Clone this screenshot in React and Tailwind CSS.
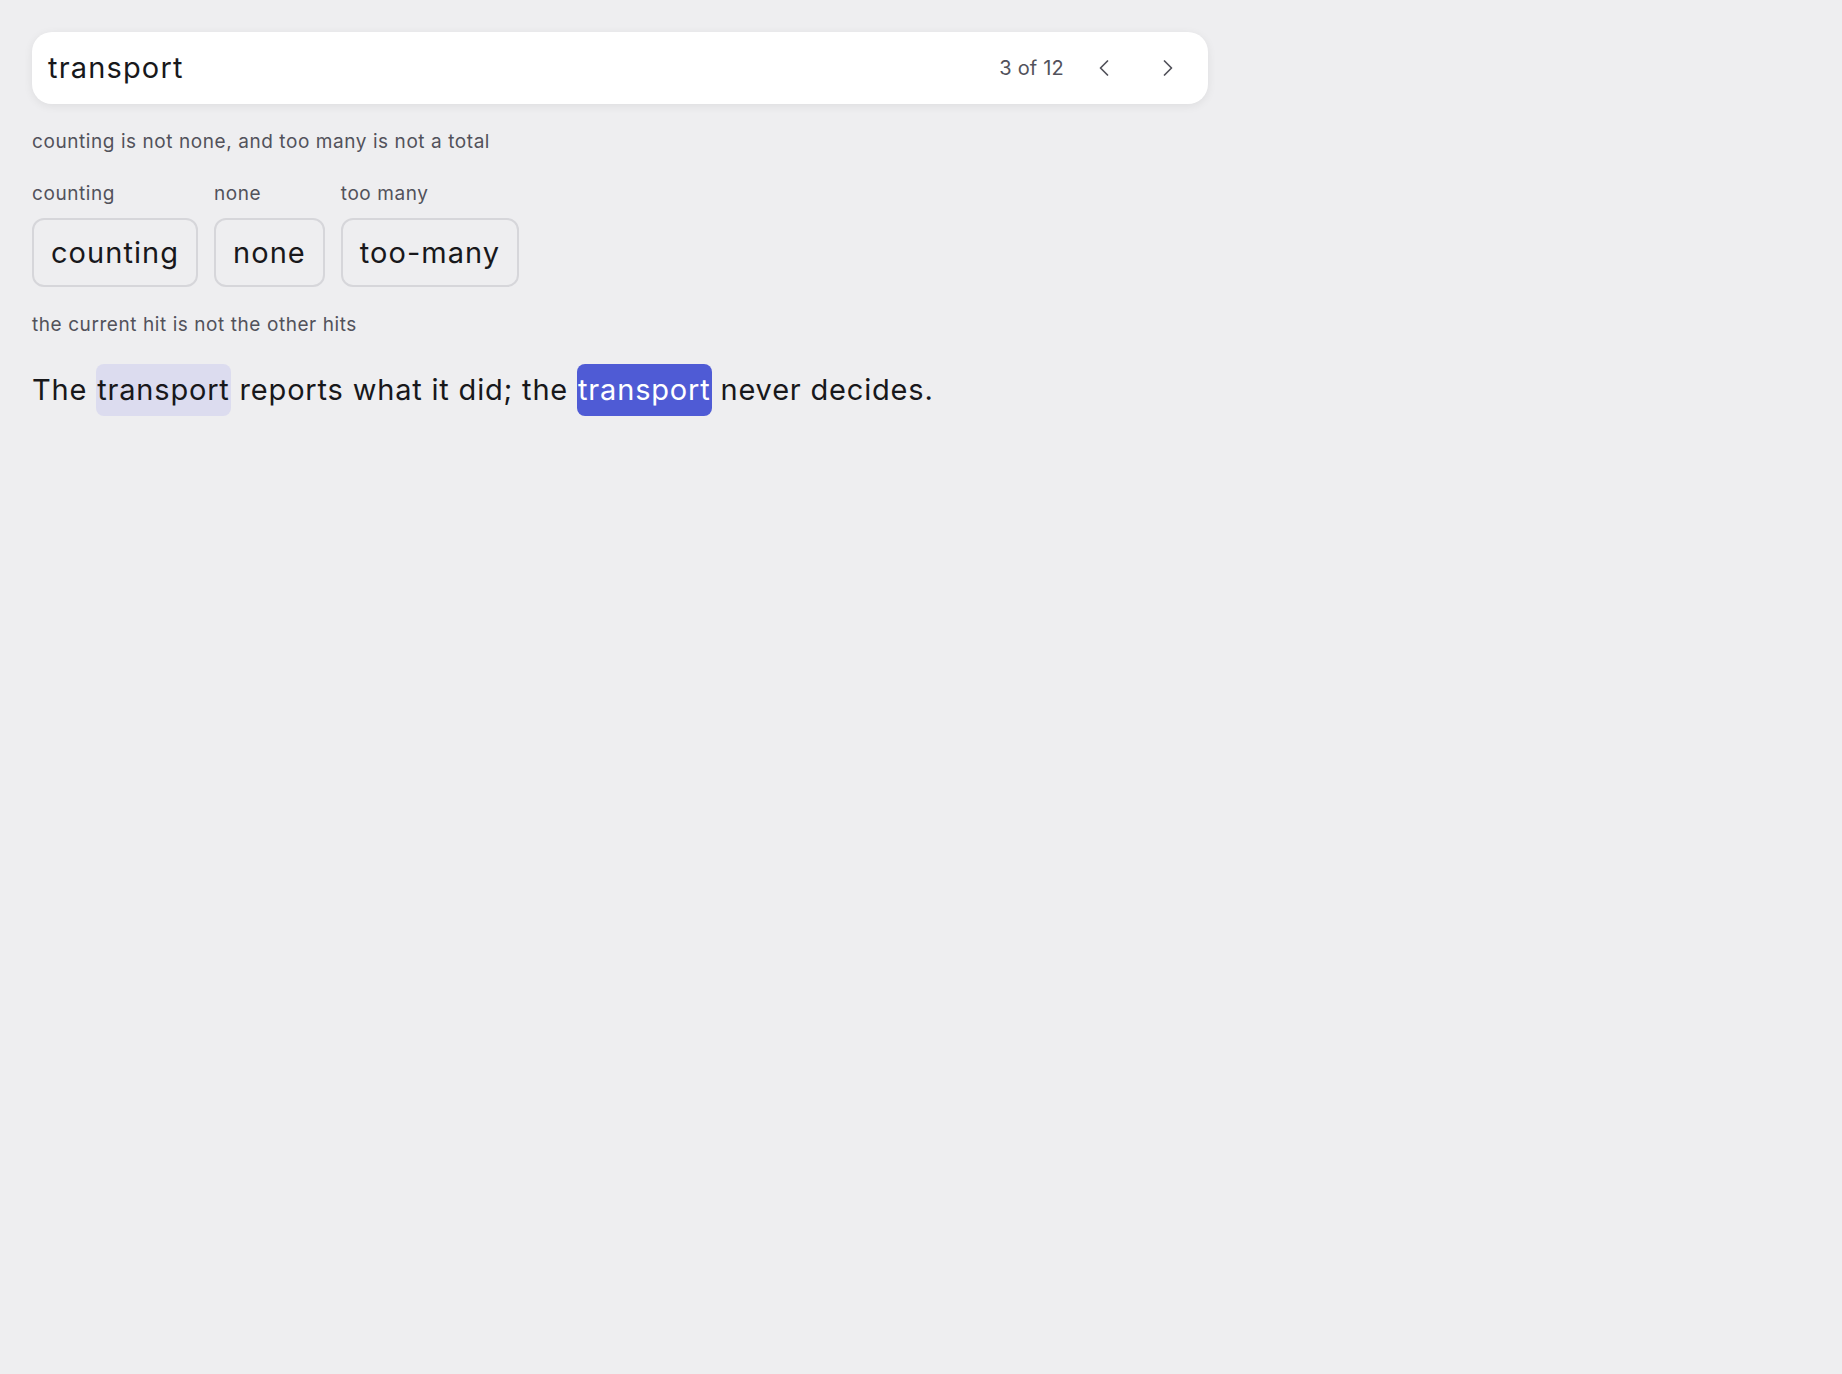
import React from "react";
import { ChevronLeft, ChevronRight } from "lucide-react";

export default function App() {
  const chips = [
    { label: "counting", text: "counting" },
    { label: "none", text: "none" },
    { label: "too many", text: "too-many" },
  ];
  return (
    <div
      className="min-h-screen bg-[#eeeef0] p-8 text-[#18181b]"
      style={{ fontFamily: "Inter, 'Noto Sans', sans-serif" }}
    >
      <div className="flex h-[72px] w-[1176px] items-center gap-4 rounded-[20px] bg-white pl-4 pr-4 shadow-[0_2px_10px_rgba(0,0,0,0.07)]">
        <div className="flex-1 pb-[2px] text-[29px] leading-none tracking-[0.04em] text-[#18181b]">transport</div>
        <div className="text-[20px] leading-none tracking-[0.01em] text-[#52525b]">3 of 12</div>
        <div className="flex items-center gap-4">
          <button className="flex h-12 w-12 items-center justify-center text-[#52525b]">
            <ChevronLeft size={28} strokeWidth={1.5} />
          </button>
          <button className="flex h-12 w-12 items-center justify-center text-[#52525b]">
            <ChevronRight size={28} strokeWidth={1.5} />
          </button>
        </div>
      </div>

      <div className="mt-6 text-[19px] leading-[28px] tracking-[0.03em] text-[#52525b]">
        counting is not none, and too many is not a total
      </div>

      <div className="mt-6 flex gap-4">
        {chips.map((c) => (
          <div key={c.label} className="flex flex-col">
            <div className="text-[19px] leading-[28px] tracking-[0.03em] text-[#52525b]">{c.label}</div>
            <div className="mt-[10px] flex h-[69px] items-center rounded-xl border-2 border-[#d6d6da] px-[17px] text-[29px] tracking-[0.036em] text-[#18181b]">
              {c.text}
            </div>
          </div>
        ))}
      </div>

      <div className="mt-6 text-[19px] leading-[28px] tracking-[0.03em] text-[#52525b]">
        the current hit is not the other hits
      </div>

      <div className="mt-6 pt-px text-[29px] leading-[52px] tracking-[0.028em] text-[#18181b]">
        The{" "}
        <span className="inline-block rounded-lg bg-[#dcdcef] px-px leading-[52px]">transport</span>{" "}
        reports what it did; the{" "}
        <span className="inline-block rounded-lg bg-[#4f5bd5] px-px leading-[52px] text-white">transport</span>{" "}
        never decides.
      </div>
    </div>
  );
}
